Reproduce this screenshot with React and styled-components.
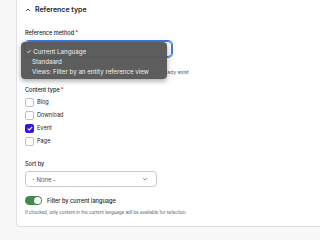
import React from "react"
import styled, { createGlobalStyle } from "styled-components"

const GlobalStyle = createGlobalStyle`
  html, body {
    margin: 0;
    padding: 0;
    background: #f7f7f8;
    font-family: Inter, "Noto Sans", sans-serif;
    color: #232429;
    overflow: hidden;
  }
`

const Page = styled.div`
  height: 231px;
  overflow: hidden;
  padding: 0 0 0 16px;
  box-sizing: border-box;
`

const Card = styled.section`
  height: 227px;
  margin-right: -20px;
  box-sizing: border-box;
  background: #fff;
  border: 1px solid #e1e1e6;
  border-top: none;
  border-right: none;
  border-radius: 0 0 0 4px;
  padding: 0 0 0 8px;
`

const Summary = styled.header`
  display: flex;
  align-items: center;
  gap: 4px;
  height: 17px;
  padding-top: 1px;
  font-size: 7px;
  font-weight: 600;
  color: #232429;
`

const Body = styled.div`
  padding-top: 12px;
  display: flex;
  flex-direction: column;
`

const Label = styled.div`
  font-size: 5.6px;
  line-height: 6.8px;
  font-weight: 500;
  color: #232429;
  margin-bottom: 4px;
  span {
    color: #dc2323;
    margin-left: 1px;
  }
`

const Field = styled.div`
  position: relative;
  margin-bottom: ${props => props.$mb || 0}px;
`

const Select = styled.div`
  width: ${props => props.$w}px;
  height: 16px;
  box-sizing: border-box;
  border: 1px solid ${props => (props.$focus ? "#3a78e6" : "#c8c8d0")};
  box-shadow: ${props => (props.$focus ? "0 0 0 1px #3a78e6" : "none")};
  border-radius: 4px;
  display: flex;
  align-items: center;
  justify-content: space-between;
  padding: 0 8px 0 6px;
  font-size: 6px;
  color: #545560;
`

const Help = styled.div`
  font-size: ${props => props.$size || 5}px;
  line-height: ${props => (props.$size || 5) * 1.2}px;
  color: #55565b;
  margin-top: ${props => props.$mt || 0}px;
  white-space: nowrap;
`

const Dropdown = styled.ul`
  position: absolute;
  left: -4px;
  top: 1px;
  width: 146px;
  margin: 0;
  padding: 5px 0 2px;
  list-style: none;
  background: rgba(88, 88, 88, 0.97);
  border-radius: 4px;
  box-shadow: 0 2px 5px rgba(0, 0, 0, 0.35);
  z-index: 2;
`

const Option = styled.li`
  height: 10px;
  line-height: 10px;
  font-size: 6.2px;
  color: #f2f2f2;
  padding-left: ${props => (props.$checked ? 5 : 11)}px;
  white-space: nowrap;
`

const Checks = styled.div`
  display: flex;
  flex-direction: column;
  gap: 4px;
  margin-bottom: 15px;
`

const CheckRow = styled.label`
  display: flex;
  align-items: center;
  gap: 3px;
  font-size: 5.6px;
  color: #232429;
`

const Box = styled.span`
  width: 9px;
  height: 9px;
  box-sizing: border-box;
  border-radius: 2px;
  border: 1px solid ${props => (props.$checked ? "#3216e8" : "#c0c0c8")};
  background: ${props => (props.$checked ? "#3216e8" : "#fff")};
  display: flex;
  align-items: center;
  justify-content: center;
`

const ToggleRow = styled.div`
  display: flex;
  align-items: center;
  gap: 5px;
  font-size: 5.6px;
  font-weight: 500;
  margin-top: 9px;
`

const Toggle = styled.span`
  width: 17px;
  height: 9px;
  border-radius: 5px;
  background: #3f8a4c;
  position: relative;
  &::after {
    content: "";
    position: absolute;
    right: 1px;
    top: 1px;
    width: 7px;
    height: 7px;
    border-radius: 50%;
    background: #fff;
  }
`

const Chevron = ({ up }) => (
  <svg width="6" height="4" viewBox="0 0 6 4">
    <path
      d={up ? "M1 3 L3 1 L5 3" : "M1 1 L3 3 L5 1"}
      fill="none"
      stroke={up ? "#3a3b40" : "#8a8b92"}
      strokeWidth="0.9"
    />
  </svg>
)

const Tick = () => (
  <svg width="6" height="5" viewBox="0 0 6 5">
    <path d="M0.8 2.6 L2.3 4 L5.2 0.9" fill="none" stroke="#fff" strokeWidth="1.1" />
  </svg>
)

const types = [
  { name: "Blog", checked: false },
  { name: "Download", checked: false },
  { name: "Event", checked: true },
  { name: "Page", checked: false },
]

export default function App() {
  return (
    <>
      <GlobalStyle />
      <Page>
        <Card>
          <Summary>
            <Chevron up />
            <span>Reference type</span>
          </Summary>
          <Body>
            <Label>
              Reference method<span>*</span>
            </Label>
            <Field $mb={12}>
              <Select $w={147} $focus />
              <Help $mt={12}>
                The Views option is only available when matching views already exist
              </Help>
              <Dropdown>
                <Option $checked>✓ Current Language</Option>
                <Option>Standaard</Option>
                <Option>Views: Filter by an entity reference view</Option>
              </Dropdown>
            </Field>
            <Label>
              Content type<span>*</span>
            </Label>
            <Checks>
              {types.map(t => (
                <CheckRow key={t.name}>
                  <Box $checked={t.checked}>{t.checked && <Tick />}</Box>
                  {t.name}
                </CheckRow>
              ))}
            </Checks>
            <Label>Sort by</Label>
            <Field>
              <Select $w={132}>
                <span>- None -</span>
                <Chevron />
              </Select>
            </Field>
            <ToggleRow>
              <Toggle />
              <span>Filter by current language</span>
            </ToggleRow>
            <Help $size={4.4} $mt={4.5}>
              If checked, only content in the current language will be available for selection.
            </Help>
          </Body>
        </Card>
      </Page>
    </>
  )
}
